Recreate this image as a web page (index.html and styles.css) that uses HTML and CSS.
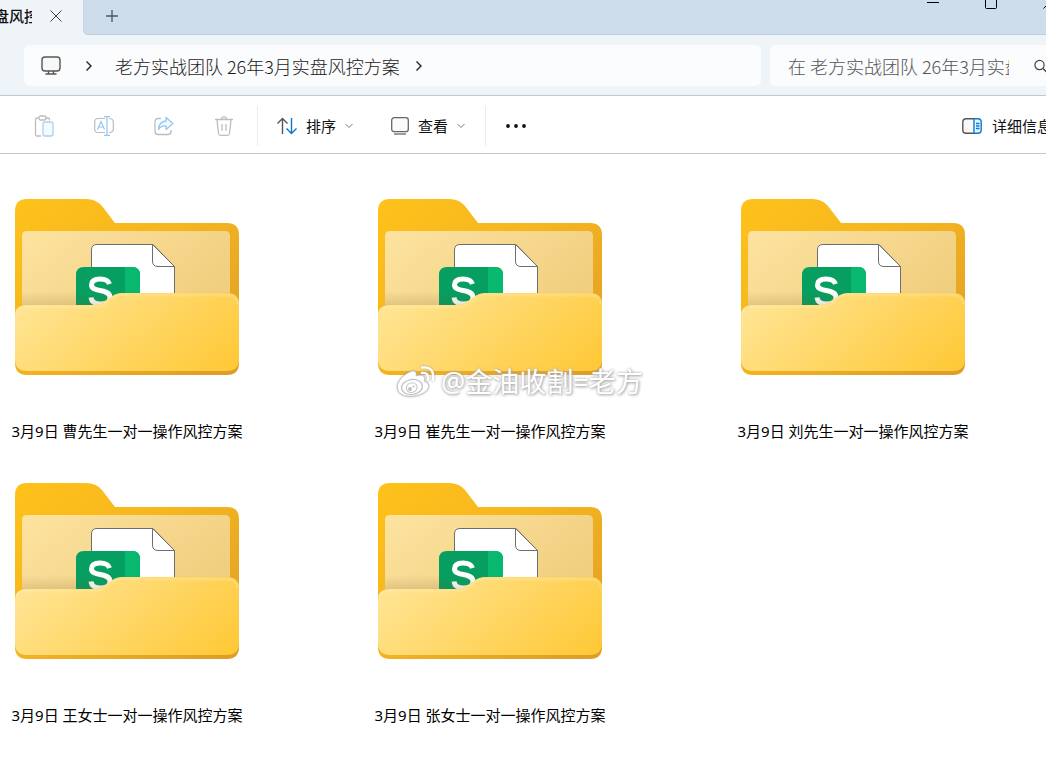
FILE: index.html
```html
<!DOCTYPE html>
<html lang="zh-CN">
<head>
<meta charset="utf-8">
<meta name="viewport" content="width=device-width, initial-scale=1">
<title>老方实战团队 26年3月实盘风控方案</title>
<link rel="stylesheet" href="styles.css">
</head>
<body>
<svg class="defs" width="0" height="0" aria-hidden="true">
  <defs>
    <linearGradient id="back" x1="0" y1="0" x2="1" y2="1"><stop offset="0" stop-color="#ffc21a"/><stop offset=".45" stop-color="#f5b51f"/><stop offset="1" stop-color="#dc9c28"/></linearGradient>
    <linearGradient id="paper" x1="0" y1="0" x2="1" y2=".5"><stop offset="0" stop-color="#fde3a0"/><stop offset="1" stop-color="#f1cf80"/></linearGradient>
    <linearGradient id="shade" x1="0" y1="0" x2="0" y2="1"><stop offset="0" stop-color="#6b5420" stop-opacity="0"/><stop offset="1" stop-color="#6b5420" stop-opacity=".4"/></linearGradient>
    <linearGradient id="front" gradientUnits="userSpaceOnUse" x1="0" y1="106" x2="126" y2="255"><stop offset="0" stop-color="#ffe596"/><stop offset="1" stop-color="#ffc834"/></linearGradient>
    <symbol id="folder" viewBox="0 0 224 176">
      <path d="M0 12Q0 0 12 0H71Q81 0 87 7L100 24H212Q224 24 224 36V164Q224 176 212 176H12Q0 176 0 164Z" fill="url(#back)"/>
      <path d="M7 37Q7 32 12 32H210Q215 32 215 37V120H7Z" fill="url(#paper)"/>
      <path d="M76.500 120V51Q76.500 45.500 82 45.500H138L159.500 67.500V120Z" fill="#fff" stroke="#6e6e6e"/>
      <path d="M137.500 45.500V62Q137.500 67.500 143 67.500H159.500Z" fill="#fff" stroke="#6e6e6e"/>
      <path d="M61 120V76Q61 68 69 68H117Q125 68 125 76V120Z" fill="#069f61"/>
      <path d="M110 68H117Q125 68 125 76V120H110Z" fill="#08b86f"/>
      <path d="M94.500 85C93 80.500 89 80 85 80C79.500 80 76.500 82 76.500 86C76.500 94 95 89 95 98.500C95 103 91 105 85.500 105C79.500 105 76.500 102.500 76 98.500" fill="none" stroke="#fff" stroke-width="5"/>
      <path d="M7 92H215V112H7Z" fill="url(#shade)" opacity=".6"/>
      <path d="M0 117Q0 106 12 106H78Q84 106 89 103L96 98Q101 94 107 94H212Q224 94 224 106V160Q224 172 212 172H12Q0 172 0 160Z" fill="url(#front)"/>
      <path d="M1 115Q2 108 12 108H78Q85 108 90 105L97 99Q101 96 107 96H212Q222 96 223 105" fill="none" stroke="#fff0bd" stroke-width="3" opacity=".25"/>
    </symbol>
    <symbol id="down" viewBox="0 0 8 6"><path d="M.5 1L4 4.500L7.500 1" fill="none" stroke="#777"/></symbol>
    <symbol id="next" viewBox="0 0 8 12"><path d="M1.500 1.500L6 6L1.500 10.500" fill="none" stroke="#222" stroke-width="1.400"/></symbol>
  </defs>
</svg>
<div class="window">
  <header class="titlebar">
    <div class="tab">
      <span class="tab-title">盘风控方案</span>
      <button class="plain" aria-label="关闭标签页"><svg width="12" height="12" viewBox="0 0 12 12"><path d="M.5.5l11 11M11.500.5l-11 11" stroke="#444" fill="none"/></svg></button>
    </div>
    <div class="strip">
      <button class="plain" aria-label="新建标签页"><svg width="12" height="12" viewBox="0 0 12 12"><path d="M6 0v12M0 6h12" stroke="#555" stroke-width="1.300"/></svg></button>
      <div class="controls">
        <button class="plain" aria-label="最小化"><svg width="12" height="10" viewBox="0 0 12 10"><path d="M0 2.500h12" stroke="#000"/></svg></button>
        <button class="plain" aria-label="最大化"><svg width="12" height="10" viewBox="0 0 12 10"><path d="M.5-2V7.500Q.5 8.500 1.500 8.500H10.500Q11.500 8.500 11.500 7.500V-2" fill="none" stroke="#000"/></svg></button>
        <button class="plain" aria-label="关闭"><svg width="12" height="10" viewBox="0 0 12 10"><path d="M.5 8.500l11-11M11.500 8.500l-11-11" stroke="#000"/></svg></button>
      </div>
    </div>
  </header>

  <div class="navigation">
    <nav class="address" aria-label="路径">
      <svg width="20" height="20" viewBox="0 0 20 20" fill="none" stroke="#555" stroke-width="1.400"><rect x="1" y="1" width="18" height="14" rx="3" fill="#f8f8f8"/><path d="M7.500 15v3M12.500 15v3M4.500 18h11"/></svg>
      <svg class="next" width="8" height="12"><use href="#next"/></svg>
      <a class="crumb" href="#">老方实战团队 26年3月实盘风控方案</a>
      <svg width="8" height="12"><use href="#next"/></svg>
    </nav>
    <div class="search">
      <input type="text" aria-label="搜索" placeholder="在 老方实战团队 26年3月实盘风控方案 中搜索">
      <button class="plain" aria-label="开始搜索"><svg width="14" height="14" viewBox="0 0 14 14"><path d="M8.500 9L13 13.500" stroke="#444" stroke-width="1.300"/><circle cx="5.500" cy="6" r="4.600" fill="none" stroke="#444" stroke-width="1.200"/></svg></button>
    </div>
  </div>

  <div class="toolbar">
    <div class="tools">
      <button class="plain" aria-label="粘贴"><svg width="20" height="22" viewBox="0 0 20 22" fill="none" stroke="#bdbdbd" stroke-width="1.300"><path d="M5 3H3Q1.500 3 1.500 4.500V19.500Q1.500 21 3 21H7M11 3h3Q15.500 3 15.500 4.500V5.500"/><rect x="5" y="1" width="7" height="4" rx="1.500"/><rect x="9" y="7" width="10" height="14" rx="2" fill="#f5faff" stroke="#a9d2f2"/></svg></button>
      <button class="plain" aria-label="重命名"><svg width="20" height="20" viewBox="0 0 20 20" fill="none" stroke="#bdbdbd" stroke-width="1.200"><path d="M11 2.500H4Q.7 2.500.7 6V13Q.7 16.500 4 16.500H11M15 2.500Q19.300 2.500 19.300 6V13Q19.300 16.500 15 16.500"/><path d="M3.500 13.500L7 5.500L10.500 13.500M4.800 11h4.400M13 .7V19.300M10 .7h6M10 19.300h6" stroke="#93c8f2"/></svg></button>
      <button class="plain" aria-label="共享"><svg width="20" height="20" viewBox="0 0 20 20" fill="none" stroke="#bdbdbd" stroke-width="1.300"><path d="M7 2.500H4Q1 2.500 1 6V15.500Q1 18.500 4 18.500H14Q17 18.500 17 15.500V14"/><path d="M12 1.500L19 7.500L12 13.500V10Q7 9.500 4.500 13.500Q5 5.500 12 5Z" stroke="#93c8f2" fill="#f5faff" stroke-linejoin="round"/></svg></button>
      <button class="plain" aria-label="删除"><svg width="20" height="20" viewBox="0 0 20 20" fill="none" stroke="#bdbdbd" stroke-width="1.300"><path d="M1 3.500h18M7.500 3.500Q7.500.8 10 .8T12.500 3.500M3 4L4.500 17.500Q4.700 19.300 6.500 19.300H13.500Q15.300 19.300 15.500 17.500L17 4M8 8v7M12 8v7"/></svg></button>
    </div>
    <div class="group">
      <button class="plain menu"><svg width="20" height="18" viewBox="0 0 20 18" fill="none" stroke-width="1.400"><path d="M5.500 17V1.500M.5 6.500L5.500 1.500L10.500 6.500" stroke="#555"/><path d="M14.500 1V16M9.500 11.500L14.500 16.500L19.500 11.500" stroke="#0b78d0"/></svg><span>排序</span><svg width="8" height="6"><use href="#down"/></svg></button>
      <button class="plain menu view"><svg width="18" height="18" viewBox="0 0 18 18" fill="none" stroke="#666" stroke-width="1.300"><rect x=".7" y=".7" width="16.600" height="14" rx="2.500" fill="#fafafa"/><path d="M3 17h12"/></svg><span>查看</span><svg width="8" height="6"><use href="#down"/></svg></button>
    </div>
    <button class="plain more" aria-label="更多"><svg width="20" height="4" viewBox="0 0 20 4" fill="#111"><circle cx="2" cy="2" r="1.900"/><circle cx="10" cy="2" r="1.900"/><circle cx="18" cy="2" r="1.900"/></svg></button>
    <button class="plain details"><svg width="20" height="16" viewBox="0 0 20 16" fill="none" stroke-width="1.400"><path d="M12 .8H4Q.8.8.8 4V12Q.8 15.200 4 15.200H12" fill="#f8f8f8" stroke="#555"/><path d="M12 .8h4Q19.200.8 19.200 4V12Q19.200 15.200 16 15.200H12ZM14 5.500h3.500M14 8h3.500M14 10.500h3.500" fill="#eaf6ff" stroke="#0b7bd3"/></svg><span>详细信息</span></button>
  </div>

  <main class="files">
    <figure class="file"><svg viewBox="0 0 224 176" aria-hidden="true"><use href="#folder"/></svg><figcaption>3月9日 曹先生一对一操作风控方案</figcaption></figure>
    <figure class="file"><svg viewBox="0 0 224 176" aria-hidden="true"><use href="#folder"/></svg><figcaption>3月9日 崔先生一对一操作风控方案</figcaption></figure>
    <figure class="file"><svg viewBox="0 0 224 176" aria-hidden="true"><use href="#folder"/></svg><figcaption>3月9日 刘先生一对一操作风控方案</figcaption></figure>
    <figure class="file"><svg viewBox="0 0 224 176" aria-hidden="true"><use href="#folder"/></svg><figcaption>3月9日 王女士一对一操作风控方案</figcaption></figure>
    <figure class="file"><svg viewBox="0 0 224 176" aria-hidden="true"><use href="#folder"/></svg><figcaption>3月9日 张女士一对一操作风控方案</figcaption></figure>
  </main>

  <div class="watermark">
    <svg width="38" height="34" viewBox="0 0 38 34" fill="none">
      <path d="M13 7C17 5 20 6 19 11C25 9 29 11 27 16C32 18 33 22 29 26C23 32 8 33 3 28C-4 21 5 10 13 7Z" fill="#fff" stroke="#bbb" stroke-width=".6"/>
      <ellipse cx="15" cy="22" rx="10.500" ry="7.500" fill="#fff" stroke="#c4c4c4" stroke-width="1.300" transform="rotate(-8 15 22)"/>
      <ellipse cx="14.500" cy="22.500" rx="5.500" ry="4.800" fill="#fff" stroke="#c4c4c4" transform="rotate(-20 15 22)"/>
      <circle cx="13" cy="24" r="1.900" fill="#bdbdbd"/><circle cx="16.500" cy="21.500" r=".9" fill="#bdbdbd"/>
      <path d="M25 8Q32 7 31 15M25 2.500Q38 1 36 15" stroke="#fff" stroke-width="2.400" stroke-linecap="round"/>
    </svg>
    <span>@金油收割=老方</span>
  </div>
</div>
</body>
</html>
```

FILE: styles.css
```css
* { box-sizing: border-box; }

body {
  margin: 0;
  background: #fff;
  color: #111;
  font: 15px/20px "Noto Sans", "Noto Sans CJK SC", sans-serif;
}

svg { display: block; flex: none; }
.defs { position: absolute; }

.window {
  position: relative;
  min-height: 100vh;
  overflow: hidden;
}

.plain {
  display: flex;
  align-items: center;
  justify-content: center;
  padding: 0;
  border: 0;
  background: none;
  color: inherit;
  font: inherit;
  white-space: nowrap;
}

.titlebar {
  display: flex;
  height: 35px;
  background: #eff4f9;
}

.tab {
  display: flex;
  flex: none;
  width: 83px;
  height: 31px;
  align-items: center;
  gap: 18px;
}

.tab-title {
  width: 38px;
  margin-left: -6px;
  overflow: hidden;
  white-space: nowrap;
  font-weight: 500;
}

.strip {
  display: flex;
  flex: 1;
  align-items: flex-start;
  justify-content: space-between;
  border-bottom: 1px solid #b9cddd;
  border-left: 1px solid #c3d4e3;
  border-bottom-left-radius: 5px;
  background: #cdddeb;
}

.strip > .plain { padding: 10px 22px; }

.controls {
  display: flex;
  margin-right: -32px;
}

.controls .plain { width: 58px; }

.navigation {
  display: flex;
  gap: 9px;
  padding: 10px 0 9px 24px;
  border-bottom: 1px solid #bccad6;
  background: #eff4f9;
}

.address,
.search {
  display: flex;
  height: 41px;
  align-items: center;
  background: #fbfcfe;
}

.address {
  flex: 1;
  padding-left: 17px;
  border-radius: 6px;
}

.next { margin: 0 22px 0 24px; }

.crumb {
  margin-right: 15px;
  color: #1b1b1b;
  font-family: "Liberation Sans", "Noto Sans CJK SC", sans-serif;
  font-size: 18px;
  font-weight: 300;
  text-decoration: none;
  white-space: nowrap;
}

.search {
  flex: none;
  width: 276px;
  padding-left: 18px;
  border-radius: 6px 0 0 6px;
}

.search input {
  flex: none;
  width: 221px;
  height: 32px;
  margin-right: 25px;
  padding: 0;
  border: 0;
  outline: 0;
  background: none;
  font-family: "Noto Sans CJK SC", sans-serif;
  font-size: 18px;
  font-weight: 300;
}

.crumb { font-family: "Noto Sans CJK SC", sans-serif; }

.search input::placeholder { color: #555; opacity: 1; }

.toolbar {
  display: flex;
  height: 58px;
  align-items: center;
  padding-top: 2px;
  padding-left: 24px;
  border-bottom: 1px solid #bccad6;
}

.tools {
  display: flex;
  gap: 20px;
  margin-right: 13px;
}

.tools .plain { width: 40px; height: 40px; }

.group {
  display: flex;
  height: 40px;
  padding: 0 20px 0 19px;
  border-right: 1px solid #ebebeb;
  border-left: 1px solid #ebebeb;
}

.menu { gap: 9px; }
.view { margin-left: 38px; }
.more { margin-left: 20px; }

.details {
  gap: 10px;
  margin-right: -6px;
  margin-left: auto;
}

.files {
  display: grid;
  grid-template-columns: repeat(auto-fill, 254px);
  gap: 42px 109px;
  padding: 45px 0 36px;
}

.file {
  display: flex;
  flex-direction: column;
  align-items: center;
  gap: 46px;
  margin: 0;
}

.file svg { width: 224px; height: 176px; }
.file figcaption { color: #000; white-space: nowrap; }

.watermark {
  position: absolute;
  top: 364px;
  left: 397px;
  display: flex;
  align-items: center;
  gap: 6px;
  color: #fff;
  font-size: 27px;
  line-height: 36px;
  white-space: nowrap;
  text-shadow: 0 0 3px #aaa, 1px 1px 3px #aaa;
}

.watermark svg { filter: drop-shadow(0 0 1px #999); }
```
